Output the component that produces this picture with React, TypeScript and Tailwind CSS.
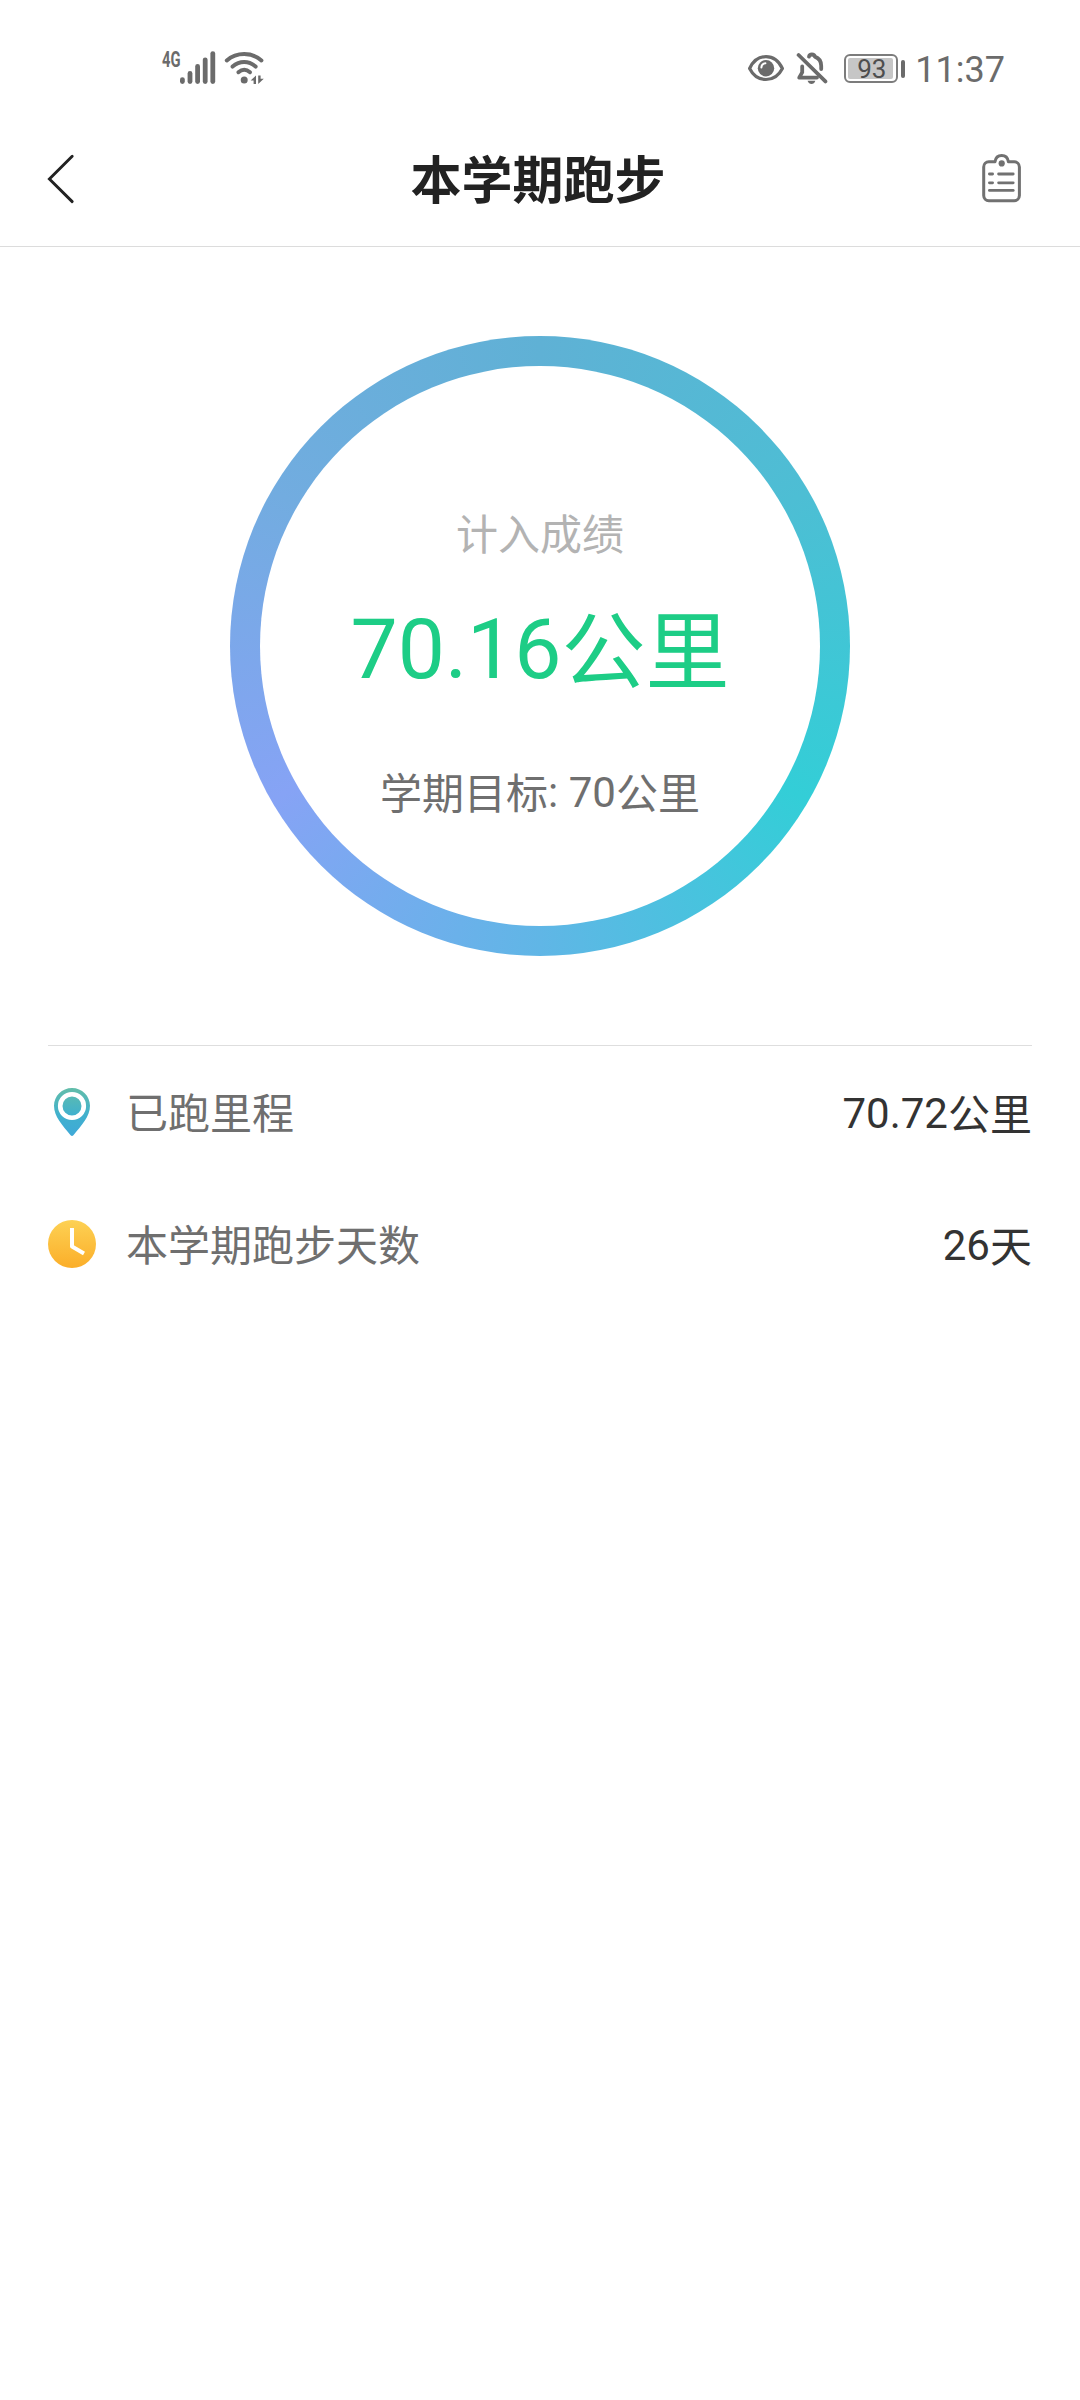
import type { ReactNode } from 'react';

const semester = {
  counted: '70.16',
  target: '70',
  total: '70.72',
  days: '26',
};

function SignalIcon() {
  return (
    <svg className="h-12 w-[60px]" viewBox="0 -8 60 48" fill="none">
      <text
        x="2"
        y="16.5"
        fontSize="21.5"
        fontWeight="700"
        fill="#6b6b6b"
        textLength="18.5"
        lengthAdjust="spacingAndGlyphs"
      >
        4G
      </text>
      <g stroke="#6b6b6b" strokeWidth="4.8" strokeLinecap="round">
        <path d="M22.4 29.6V31.6" />
        <path d="M30 23.4V31.6" />
        <path d="M37.6 16.4V31.6" />
        <path d="M45.2 9.8V31.6" />
        <path d="M52.8 3.6V31.6" />
      </g>
    </svg>
  );
}

function WifiIcon() {
  return (
    <svg className="h-10 w-[42px]" viewBox="0 0 42 40" fill="none">
      <g stroke="#6b6b6b" strokeWidth="4" strokeLinecap="round">
        <path d="M2.8 10.4C12.8 1.9 27.6 1.9 37.4 10.4" />
        <path d="M8.6 16.6C15.6 10.6 24.8 10.6 31.6 16.6" />
        <path d="M14.4 22.2C18 19.2 22.4 19.2 26 22.2" />
      </g>
      <circle cx="20.2" cy="30" r="3.5" fill="#6b6b6b" />
      <path d="M26.6 30.6L32 25.4V34H29.6V30.6ZM34.2 25.4H36.6V28.8H39.8L34.2 34Z" fill="#6b6b6b" />
    </svg>
  );
}

function EyeIcon() {
  return (
    <svg className="h-10 w-9" viewBox="0 0 36 40" fill="none">
      <path
        d="M1.6 19.5C5 12.2 11 7.6 18 7.6S31 12.2 34.4 19.5C31 26.2 25 30.5 18 30.5S5 26.2 1.6 19.5Z"
        stroke="#6b6b6b"
        strokeWidth="3.2"
        strokeLinejoin="round"
      />
      <circle cx="18" cy="19.2" r="8.2" fill="#6b6b6b" />
      <path d="M13.4 18.4C13.6 16 15.2 14.4 17.4 14.2" stroke="#fff" strokeWidth="2" strokeLinecap="round" />
    </svg>
  );
}

function BellOffIcon() {
  return (
    <svg className="h-10 w-8" viewBox="0 0 32 40" fill="none">
      <g stroke="#6b6b6b" strokeWidth="3.8" strokeLinecap="round" strokeLinejoin="round">
        <path d="M2.6 6L29.4 32.4" />
        <path d="M6.2 17.4V23.4L3.2 28.6H21" />
        <path d="M13 7.6C13.6 4.8 18.2 4.8 18.8 7.6C22.8 9 25.2 12.4 25.2 16.8V20" />
      </g>
      <path d="M11.6 31.8H19.4C18.6 34 17.2 35 15.5 35S12.4 34 11.6 31.8Z" fill="#6b6b6b" />
    </svg>
  );
}

function Battery({ level }: { level: number }) {
  return (
    <div className="flex items-center gap-[3px]">
      <div className="h-[29px] w-[54px] rounded-[6px] border-2 border-[#7c7c7c] p-[2px]">
        <div className="flex h-full w-[45px] items-center justify-center rounded-[2px] bg-[#c6c6c6] pt-[1px] pl-[2px] text-[26px] leading-none text-[#4e4e4e]">
          {level}
        </div>
      </div>
      <div className="h-[18px] w-[4px] rounded-full bg-[#6b6b6b]" />
    </div>
  );
}

function StatusBar() {
  return (
    <div className="flex h-[113px] items-end justify-between pr-[75px] pb-[23px] pl-[160px]">
      <div className="flex items-end gap-[4px]">
        <SignalIcon />
        <WifiIcon />
      </div>
      <div className="flex h-10 items-center">
        <div className="mb-[2px]">
          <EyeIcon />
        </div>
        <div className="mb-[3px] ml-[12px]">
          <BellOffIcon />
        </div>
        <div className="mb-[3px] ml-[16px]">
          <Battery level={93} />
        </div>
        <span className="ml-[10px] text-[36px] leading-10 text-[#6b6b6b]">11:37</span>
      </div>
    </div>
  );
}

function ClipboardIcon() {
  return (
    <svg className="h-[50px] w-10" viewBox="0 0 40 50" fill="none">
      <g stroke="#717171" strokeWidth="3" strokeLinecap="round" strokeLinejoin="round">
        <path d="M6.8 8.8H13C13.6 5 16.2 2.6 19.7 2.6S25.8 5 26.4 8.8H32.2C35 8.8 37.4 11 37.4 14V42.6C37.4 45.4 35 47.7 32.2 47.7H6.8C4 47.7 1.7 45.4 1.7 42.6V14C1.7 11 4 8.8 6.8 8.8Z" />
        <path d="M7.4 21H10.6M16.6 21H31.2" strokeWidth="2.8" />
        <path d="M7.4 29.8H10.6M16.6 29.8H31.2" strokeWidth="2.8" />
        <path d="M7.4 37.4H31.2" strokeWidth="2.8" />
      </g>
      <circle cx="19.7" cy="10.4" r="3.1" fill="#717171" />
    </svg>
  );
}

function Header() {
  return (
    <header className="flex h-[134px] items-center justify-between border-b border-[#dcdcdc] pr-[58px] pl-[47px]">
      <button className="w-10 pb-[2px]">
        <svg className="h-[50px] w-7" viewBox="0 0 28 50" fill="none">
          <path d="M25.2 2.2L2.4 25L25.2 47.6" stroke="#222" strokeWidth="2.9" strokeLinecap="round" />
        </svg>
      </button>
      <h1 className="pt-[6px] pl-[7px] text-[51px] font-bold text-[#222]">本学期跑步</h1>
      <button className="w-10 pb-[4px]">
        <ClipboardIcon />
      </button>
    </header>
  );
}

// Chinese glyphs sit slightly below the Latin digits' baseline
function Cjk({ children }: { children: ReactNode }) {
  return <span className="align-[-0.05em]">{children}</span>;
}

function ProgressRing() {
  return (
    <div className="size-[620px] rounded-full bg-[conic-gradient(from_120deg,#33ced7,#60b6e6_60deg,#86a3f5_120deg,#72ace0_180deg,#5fb1d5_240deg,#4dbed4_300deg,#33ced7)] p-[30px]">
      <div className="flex h-full flex-col items-center rounded-full bg-white">
        <p className="mt-[139px] h-[62px] text-[42px] leading-[62px] text-[#b3b3b3]">计入成绩</p>
        <p className="mt-[21px] h-[124px] text-[84px] leading-[124px] text-[#1dcd86]">
          {semester.counted}
          <Cjk>公里</Cjk>
        </p>
        <p className="mt-[50px] h-[62px] text-[42px] leading-[62px] text-[#6f6f6f]">
          <Cjk>学期目标</Cjk>: {semester.target}
          <Cjk>公里</Cjk>
        </p>
      </div>
    </div>
  );
}

function PinIcon() {
  return (
    <svg className="size-12" viewBox="0 0 48 48">
      <defs>
        <linearGradient id="pin" x1="0" y1="0" x2="0" y2="48" gradientUnits="userSpaceOnUse">
          <stop offset="0" stopColor="#62bda9" />
          <stop offset="0.55" stopColor="#41b1cd" />
          <stop offset="1" stopColor="#3fa9d8" />
        </linearGradient>
      </defs>
      <path
        d="M24 0C14 0 6 8 6 17.8C6 28.4 14.4 37.4 22.6 47.2Q24 48.8 25.4 47.2C33.6 37.4 42 28.4 42 17.8C42 8 34 0 24 0Z"
        fill="url(#pin)"
      />
      <circle cx="24" cy="18" r="11.8" fill="none" stroke="#fff" strokeWidth="4.6" />
    </svg>
  );
}

function ClockIcon() {
  return (
    <svg className="size-12" viewBox="0 0 48 48">
      <defs>
        <linearGradient id="clock" x1="0" y1="0" x2="0" y2="1">
          <stop offset="0" stopColor="#fdd154" />
          <stop offset="1" stopColor="#fbae29" />
        </linearGradient>
      </defs>
      <circle cx="24" cy="24" r="24" fill="url(#clock)" />
      <path d="M24 8V26.6L36 33.4" fill="none" stroke="#fff" strokeWidth="4" strokeLinejoin="round" />
    </svg>
  );
}

function StatRow({ icon, label, value, unit }: { icon: ReactNode; label: string; value: string; unit: string }) {
  return (
    <div className="flex h-[132px] items-center text-[42px] leading-[62px]">
      {icon}
      <span className="ml-[30px] flex-1 pt-[6px] text-[#6f6f6f]">{label}</span>
      <span className="h-[62px] pt-[2px] text-[#333]">
        {value}
        <Cjk>{unit}</Cjk>
      </span>
    </div>
  );
}

export default function App() {
  return (
    <div className="min-h-[2400px] w-[1080px] bg-white font-['Roboto','Noto_Sans_CJK_SC',sans-serif]">
      <StatusBar />
      <Header />
      <main>
        <section className="flex justify-center pt-[89px] pb-[89px]">
          <ProgressRing />
        </section>
        <section className="mx-12 border-t border-[#dedede]">
          <StatRow icon={<PinIcon />} label="已跑里程" value={semester.total} unit="公里" />
          <StatRow icon={<ClockIcon />} label="本学期跑步天数" value={semester.days} unit="天" />
        </section>
      </main>
    </div>
  );
}
